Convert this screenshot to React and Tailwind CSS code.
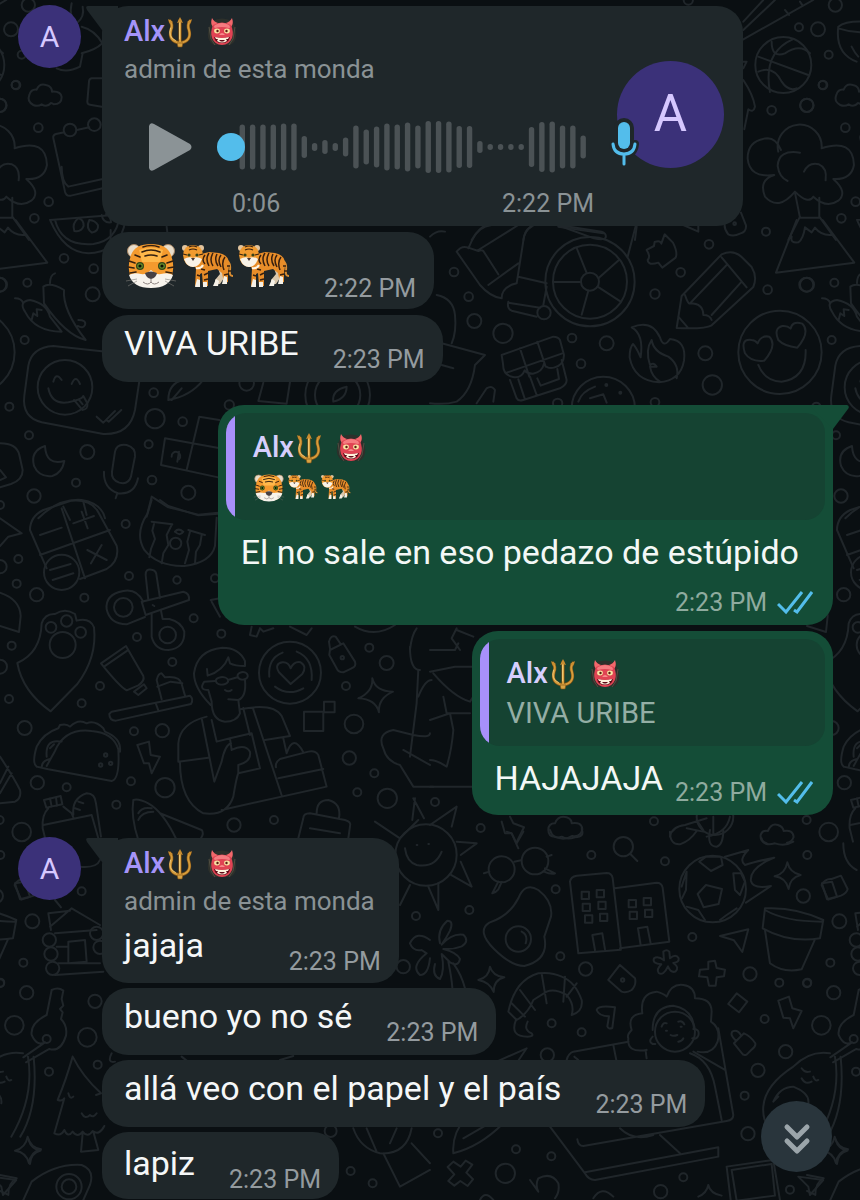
import { useState } from 'react';
import { ChevronDown } from 'lucide-react';

// Wallpaper drawings, in tiles. Each tile uses units of a third of a pixel.
const TILE_WIDTH = 807;

const doodles = [
  {
    x: 0,
    y: 0,
    paths: [
      'M215 10q-10 45 15 60q25-20 18-50M245 80q40 10 62 50q-20 20-62 30M170 205q30 15 70-5l8-40',
      'M100 315q-20-10-12-30q5-18 22-16q8-20 28-14q18 4 18 20q26-2 29 16q0 22-24 22q-4-4-8-4q-12 14-28 4q-12 8-25 2z',
      'M305 235h-30q-8 2-8 10l-5 60q0 8 8 9l35 6',
      'M160 415q-2-10 8-13l25-5M230 390l38-8M160 415l35 160q4 15 18 12l95-22M185 500q0 45 20 60l100-22',
      'M150 660l228-18q-5 90-75 112q-100 30-153-94M165 660q20 80 115 72q70-10 78-82',
      'M235 655q-20 15-12 38q20 5 28-15q0-20-16-23M268 660q-12 25 8 38q20-5 18-22q-8-15-26-16M305 645q5 25 28 22q0-18-15-25'
    ],
    dots: [[85, 15, 20], [33, 88, 21], [65, 164, 12], [48, 255, 13], [0, 316, 20], [115, 383, 13], [146, 605, 13], [103, 655, 13], [210, 390, 19], [283, 374, 19]]
  },
  {
    x: 430,
    y: 0,
    paths: [
      'M985 170l150 55M1025 125q0 50 40 35q45-30 75 0M985 215q45-20 70 30q20 30 45 20M1088 118q-90 40-68 158',
      'M940 65l60-65M940 90l95-90M940 118l210-118M1065 30l12 15M1110 5l8 12',
      'M1225 80q-10 80 55 105M1225 80q30-25 130-10M1225 85q60 20 120 5M1265 140q10 20 20 30',
      'M940 185h10l-10 20M940 240q30 45 35 80q-5 20-20 8l-12 60',
      'M1045 455a66 66 0 1 1 130-10q95-30 97 50q-8 45-62 42q45 40 15 65q-35 25-75-12q-15 25-55-15q-50 60-90 15q-20-50 28-65q-75 10-80-50q0-55 60-60q25 0 40 35',
      'M1110 458q-65-10-67 40q5 35 30 45M1122 515q15-30 45-22q25 10 20 48M1095 578l15 75h58v-60M1110 650l-35 70M1168 650l50 70',
      'M885 665q-5 20 10 38q15 8 35-2q20-5 18-25l-15-38M0 710q20-20 45-15M125 720q20-40 60-45M280 720q5-30 25-40M385 680l135 20M620 680l-5 40'
    ],
    dots: [[1060, 195, 84], [1107, 82, 12], [1178, 255, 12], [1130, 316, 20], [1025, 331, 13], [1008, 695, 12], [914, 671, 4], [775, 0, 14]]
  },
  {
    x: 0,
    y: 220,
    paths: [
      'M75 275q-20-30 15-35q50 10 60 50l35 45q-80 0-110-60zM45 235q20 0 25 15M130 200q20-15 62 10q-5 60 65 150q-60-15-125-110zM150 190q0-25 15-30M235 300q25 0 20 15q-5 12-22 3M95 300l5-20l12 8l-2-20l15 2',
      'M160 378l200 22q60 10 60 70l-15 100q-15 75-95 72l-185-35q-60-15-52-80l12-90q10-55 75-59z',
      'M160 485q8-30 25-5M215 492q12-30 25 0M145 505q10 50 60 42q40-8 45-18M222 540l25 30q18-2 15-20l-12-22M236 538l12 15M290 590l20 18l35-35M318 600l8 5l38-35',
      'M135 678q-45 15-33 60q15 35 55 30q30-10 36-45q-55 15-58-45z',
      'M345 695q5-25 35-20q28 8 25 35l-12 60q-8 25-35 18q-25-8-22-33zM312 755q-2 50 42 65q50 5 60-45M352 820l-5 15',
      'M598 590l-38 160M598 590l60 10M495 655l165 30M495 655l-12 80l175 38M515 710a13 13 0 1 1 22 8M537 695l-5 30',
      'M505 540q0-50 45-60h60q-40 50-105 60zM515 540l30-35M790 488l-15 55l85 8l10-65',
      'M1000 545q-5-35 40-45q0 35-40 45z',
      'M0 670q50 0 58 35l10 45q0 30-35 42l-33 10M0 750l18 22l-18 8',
      'M440 890l15-60l50 32l90 22l60-6M115 895q60-60 130-55q60 10 70 55M190 860l20 40M250 845l10 40M500 20l3 25M620 45q8 15 16 0M332 30v30M1045 48q8 25 30 30'
    ],
    dots: [[192, 115, 13], [281, 146, 13], [0, 194, 21], [82, 188, 12], [278, 223, 21], [74, 360, 12], [195, 502, 82], [461, 518, 13], [465, 596, 29], [548, 605, 13], [28, 560, 12], [87, 646, 12], [446, 673, 12], [262, 696, 21], [228, 788, 12], [456, 780, 13], [565, 818, 21], [102, 828, 20], [0, 855, 12], [688, 555, 14], [740, 490, 22], [1013, 525, 97], [1013, 525, 68]]
  },
  {
    x: 430,
    y: 220,
    paths: [
      'M470 159l-30-75M506 174l60-53M503 200l68 44M475 212l-20 72M453 186h-84',
      'M80 95l70 100M80 95q15-20 35-12l30 10q10-5 15 0l45 70M115 85q20-50 50-70M145 90l120-75M265 130l-90 65M150 195q30 35 65 40q0-35 45-45l22-140q5-25 30-35M265 170l85 20M235 245q-5 20 10 27l75 18M235 248l95 15M350 200l-10 55',
      'M385 15l130 20q15 5 12 18q-5 8-35 2l-110-40M618 15l-25 95M760 15l45 20v-20',
      'M650 90l22-12l2-12q18-6 20 5l10-28l25 25q15 30 8 45l-40 30l-12-15q-30 10-32-8q10-10-3-30z',
      'M755 228l120-125q35-15 60 8l30 30q18 30 5 60l-125 115q-20 12-105 8zM875 112l75 90M765 225q10 30 15 25l110-115M845 285l90-100M780 250q40 0 40 35q20 0 25 15M745 290l28 32',
      'M605 322q60-25 85 30q10 35 30 5q50 5 42 65q-10 60-75 65q-75-5-88-75q0-30 10-40q10 10 23 40q10-70-27-90zM665 360q-20 30-5 75q10-10 20 5h-20q5 30 30 45M665 360q5 35 50 50q35 25 25 65',
      'M215 405l155-55q15 0 20 10l12 45q0 30-30 38q-20 5-30-12q-5 25-33 30q-20 0-25-10q-10 25-35 20q-30-5-30-40zM230 458l165-57M270 385l28 85M322 365l25 75M240 480l20 55q5 10 20 5l110-35q20-10 20-25l-15-60M265 478l20 60M300 470l20 55M322 475l10 22l55-20l-5-30',
      'M445 545q10-30 50-45M480 535l40-12l10 25M140 550l30-45q15-10 25 5l-5 35',
      'M20 225q50 10 55 60q5 50-10 85M35 370l130 35l-30 30q-10 80-55 110q-35 10-80 5M35 435l35 10',
      'M945 400q-15-45 20-40q10 0 18 10q10-25 35-20q25 25-15 72q-40 5-58-22zM1045 360q-15-35 12-42q15-2 25 8q5-25 35-15q25 25-15 72q-40-5-57-23zM985 435q20 50 70 50q75-10 72-95',
      'M1100 0l-62 158l235-30l-95-128M1085 50q-5 20 20 17q15-10 20-45l20 15l10-14q20 25 50 22'
    ],
    dots: [[480, 185, 134], [480, 185, 111], [480, 185, 27], [342, 278, 20], [72, 156, 13], [116, 230, 13], [133, 303, 21], [219, 340, 29], [426, 354, 13], [530, 370, 21], [453, 431, 13], [675, 222, 14], [752, 157, 13], [837, 73, 13], [1013, 209, 13], [1129, 194, 21], [826, 400, 21], [847, 495, 29], [675, 547, 13], [383, 550, 14], [520, 565, 95], [529, 495, 3], [571, 518, 3], [1050, 397, 125]]
  },
  {
    x: 0,
    y: 500,
    paths: [
      'M130 30l85-28q60-5 80 35l55 100q10 45-30 70l-80 30M130 30q-40 20-40 60l50 115M185 25l70 210M120 165l210-75M120 105l65-22M245 35l18 50M220 70l62-22M262 150l58 30M305 135l-32 55M150 210l62-18M158 240l62-20',
      'M455 0l-12 40q-40 60-10 110q40 50 120 48q80-10 92-60l5-85M480 0l25 18l90 28l60-5M455 65l62 8M462 72l-5 20l8 25l-12 30l-5 25M515 75l-15 30l5 30l-15 25l-5 30M565 90l50 15M570 95l-8 30l5 25l-12 40M605 105l-5 30l-12 20l-3 35M525 95q10-12 25 0q-10 15-25 0',
      'M430 305q-20-40-60-32q-55 10-50 55q10 45 60 45l55-22M425 305l125-30q20 5 17 25l-130 45zM437 225q0-20 18-16q15 2 15 20l10 65M437 225l8 75M455 340v70q10 40 50 40q50-5 48-55q-10-30-45-38h-20l-5-25M458 315l5 3',
      'M125 370q10-30 40-28q30-20 60 0l5 20q40-10 52 20q10 90-50 170l-80 82q-85-60-100-145q70-30 73-119z',
      'M303 490l75-52l52 90q5 15-15 28l-35 15q-20-10-77-81zM312 500l70-48M402 575l30-22l8 12l-25 20z',
      'M335 635l235-48q12 10 3 25l-225 50q-20 0-20-20zM468 612l8 22M485 598l-15-58q5-20 15-20l10 12q45-5 50 20l10 35M472 560l40-15l35 5',
      'M632 615q-50-50-50-95q10-70 85-77q50 0 68 40v15q-30 0-45-8l-5-18q-15 40-62 55l-2-20M735 540q5 50-20 60l-30-2M675 570q10 8 20 0M715 600l5 40q-10 25-45 25q-40-5-40-60l-10-35q-30 0-12-25l32-2',
      'M620 650q-80 20-85 80v55l90-12M540 785q0 120 70 155q70 10 90-50q10-60 15-70l65-15l-25-105l-65 15l5 35M605 655l38 190l22-60q10-50 28-55M635 660l15 65l40-10M715 820v-25q40-10 35-40q-15-25-55-5M720 628q100-20 125 20l25 60l-75 12M730 625l20 80M760 628l85 258M665 930l315-70l-25-95q-10-15-30-10l-85 22q-15 10-12 25M835 835l135-28M850 715l10 45q20-60 50-3',
      'M648 545a18 11 0 1 0 36-5a18 11 0 1 0-36 5M713 530a15 11 0 1 0 30-5a15 11 0 1 0-30 5M684 540l28-8',
      'M872 552l-35-35q-15-25 10-30q18-2 25 18q10-22 30-18q20 12 5 35zM808 530q-5-55 40-72M890 455q50 20 45 85M825 560q40 30 85 5',
      'M990 450l40-20l35 55q5 15-10 20l-25 12q-15 0-20-12l-22-40zM990 445l-3-20q5-20 20-15l15 22',
      'M912 635h58v58h-58zM972 605h32v32h-32z',
      'M1117 535q10 40 62 40q-45 20-42 62q-10-40-62-42q45-20 42-60zM412 735l35-10l5 40l28 5l-25 50l-8-30h-15z',
      'M110 800q-15-10 0-60q20-40 65-55l5-10q20-5 30 5q25-25 50-10q25-10 50 15l5 10q50 20 45 60M110 800l35 8l190 35q25-5 20-95q-15-50-80-55q-80-10-110 60l-25 45M125 802q0-20 25-25M140 770q-5-55 45-45M150 745l12-12',
      'M132 900l50-12l5 25l-48 10zM150 895l5 25M168 892l3 25M145 925q-20 20-17 60l10 40M190 920l25 20l5 12M130 975l145-30l20 70M220 945q-5-50 40-65q25 0 28 30l15 100M235 905l15 5M225 925l15 5',
      'M400 900q15-5 45 10q45 25 85 110M400 900q-8 50 15 120M480 940l125 50q8 10-2 25M415 940q10-20 40-15M415 960q10-25 45-25',
      'M895 1015l15-60q0-15 20-15l105 20q20 5 15 20l-5 35M950 940q0-40 35-40q40 10 32 55M930 985l90 15',
      'M1150 745q-20-45 30-55l60 15q50 10 50-5M1150 745q10 40 50 50l40 65h60M1255 510l-5 100l-20 160M1230 450q5-45 20-65M1230 440q0 70 30 70M1255 590q20-50 40-50M1210 750l80 45M1245 895l-8 65M1240 895l32 60M1125 965l75 50l55-55',
      'M0 55l65 45l-40 10l-25 28M0 278q60 20 62 70l-5 48l-57-18M0 770q40 60 60 100q5 25-15 35l-45 5M0 850l25-50M0 880l35-60M755 380l-5 25l20 5l10-25M780 385l10 10l30-10M870 380l50 25l15-20M1065 380q60 35 120-5',
      'M632 300l28-5M635 305l25 45'
    ],
    dots: [[185, 217, 53], [527, 130, 17], [370, 322, 28], [503, 405, 25], [153, 382, 16], [200, 363, 17], [242, 397, 16], [188, 435, 39], [870, 518, 93], [1027, 473, 5], [317, 765, 5], [302, 795, 5], [332, 790, 5], [377, 72, 12], [55, 177, 12], [387, 228, 12], [531, 240, 11], [645, 235, 12], [50, 251, 12], [110, 284, 20], [0, 200, 20], [253, 293, 12], [581, 355, 12], [411, 411, 12], [664, 401, 12], [517, 486, 12], [35, 437, 12], [0, 500, 21], [300, 558, 12], [27, 597, 12], [245, 610, 12], [74, 684, 21], [402, 694, 12], [487, 692, 20], [112, 848, 20], [200, 862, 12], [393, 844, 12], [495, 863, 29], [349, 914, 12], [65, 996, 28], [702, 975, 20], [822, 960, 12], [1072, 877, 12], [1162, 895, 29], [1123, 820, 12], [1048, 774, 20], [1062, 672, 28], [1038, 558, 12], [1108, 443, 12], [1160, 489, 21]]
  },
  {
    x: 430,
    y: 500,
    paths: [
      'M80 385l-15 30l25 35M0 450h75l10-20M0 515l75-15h60M10 520q60 70 110 85l10-15M40 590l10 50h70M0 660l60-20l10 50q-5 60-20 110q-30-20-50-20M80 390l50 20M0 860h130M0 975l80-55l-15 60',
      'M215 965l10 35h20l20 45M240 950l10 20l32 12l-20 40',
      'M375 1010q-20 0-20-20q0-20 20-20q10-25 35-18q15 5 15 18q30-5 32 18q-5 25-30 20q-25 15-52 2z',
      'M720 1010q5-30 45-35l65-20M830 1010q60-10 70-60M770 985l50 10M850 950v55M800 960l20 30',
      'M1010 1030q-20-5-18-25q5-15 22-12q10-25 30-18q15 5 17 18q28-5 30 18q-5 15-20 17'
    ],
    dots: [[15, 906, 12], [152, 984, 12], [672, 964, 12], [1130, 960, 12], [855, 950, 55]]
  },
  {
    x: 0,
    y: 830,
    paths: [
      'M145 250l65-8M145 250l8 50M150 290l65-55l85 50M165 310l125-10M170 350h35M175 400h125M165 435l145-10M205 335l50-5l5 65l-55 5z',
      'M45 160l30-5l15 45l-30 8zM240 110q50 5 60-20M165 210l18 22',
      'M155 480q20-10 35 2l-5 25l5 20l-10 10l8 10l-5 20q20 20 15 50q-15 50-50 40l-70 40M155 480l-15 75q-50 25-45 60q15 35 40 22l-65 45',
      'M218 680q-20 70-45 130q15 5 20-5l-30 105q20 10 30-10q10 25 25 5q15 20 30 0q15 20 30-2q20 15 35-15M218 680q30 60 85 110l-15 5M248 910l-5 55l52-5l-15-55M205 790q5 20 15 10M245 850q10 20 25 5q10 10 20-5',
      'M83 920q8 32 40 38q-32 8-36 42q-8-34-42-38q32-8 38-42zM0 1035l50 10q-25 12-25 50l-25-12M70 1110l25-55q70-55 150-50q40 15 25 60l-20 45',
      'M1230 340q20-40 60-10M1230 340q10 25 35 20l15 10q-50 40-20 65q25 0 30-50M335 670q-15 30 10 25M545 680l15 12M840 690l40-12M1060 895q20 60 80 75q80 5 95-75M1100 895l30 70M1170 940l20-45M1150 970l50 100l90-50M1235 940l55 60'
    ],
    dots: [[148, 330, 20], [153, 372, 20], [158, 415, 20], [290, 310, 20], [300, 352, 20], [140, 627, 12], [207, 1070, 38], [207, 1070, 22], [245, 184, 12], [97, 274, 21], [70, 398, 12], [80, 488, 20], [285, 514, 20], [43, 586, 28], [262, 622, 28], [147, 725, 12], [293, 704, 12], [0, 460, 12], [1248, 258, 12], [1052, 1023, 12], [1118, 1060, 12], [992, 903, 18], [1210, 410, 20]]
  },
  {
    x: 430,
    y: 830,
    paths: [
      'M80 35l60 5l-48 35M92 95l33 75l-62-35M25 160v80l-30-70M-60 165l-30 60M35 65q-20 50-75 40q-30-10-35-50M-40 45h2M-5 42h2',
      'M253 95l20-4M205 155l-18 35q10-2 18-12l10-22M178 125l-16 5M350 80l15-5M345 115l30 15q-10 5-35-6',
      'M265 205q20-50 60-25q45 35 38 80l-20 60q15 70-60 88q-40 0-90-50q-55-55-15-80q60-20 87-73zM275 305q20 10 12 35',
      'M445 370l-25-215q2-15 20-18l90-8q15 0 18 15l25 215zM555 175l125-17q15 0 18 15l20 162l-148 20M495 360l-8-45l30-5l8 48M632 345l-8-50l28-5l10 50',
      'M455 185h22v22h-22zM500 180h22v22h-22zM458 221h22v22h-22zM505 215h22v22h-22zM465 256h22v22h-22zM510 251h22v22h-22zM596 210h22v22h-22zM641 204h22v22h-22zM599 245h22v22h-22zM645 239h22v22h-22z',
      'M828 165l48 12l-10 45l-45 10l-18-40zM808 95l20-15h45l5 25l-35 18zM755 170l15-45l-2 55l-12 25M910 130l5 50l15 15l15-40l-12-25zM770 230l35 10l20 30M870 270l20-15l30-20M885 80l70-20q-30 30-10 45q30-10 88-22q-75 30-70 70q5 25 60 15l-75 50',
      'M602 73l20 20M1072 97q8 32 40 38q-32 8-36 42q-8-34-42-38q32-8 38-42zM180 410q8 28 43 32q-32 8-32 44q-12-30-46-36q32-8 35-40zM1217 930q8 28 36 32q-30 8-32 40M835 1065q5 25 40 32M835 1065q-5 25-30 35',
      'M1005 235q90-5 175 35l-10 55q-90 15-172-30zM1005 240q60 35 172 35M1005 300l15 100q40 30 95 18l40-90',
      'M870 318l85-20l-18 68l-25-35zM1105 1040l75 10l-40 45l-5-25z',
      'M700 365q10-8 18 0l2 20q18-15 26 0q2 12-16 14q20 14 6 26q-14 4-22-16q-14 30-28 20q-8-10 8-26q-28-2-22-18q12-8 30 6z',
      'M835 395l20-3l5 22l25 5l-3 20l-22 3l-3 25h-20l-5-25l-25-3l3-20l25-2zM70 995l22 15l15-18l20 12l-18 24l20 20l-16 20l-22-15l-18 14l-18-14l18-20l-20-22zM920 490l32 25l-25 32l-32-25z',
      'M570 405l45 40q5 20-10 35q-15 10-30 5l-40-35zM1045 512l32-12l10 35l28 8l-25 52l-10-30l-20-2zM500 540q5-15 55-8l-8 62q-12 5-15-5l5-30q-30 0-37-19z',
      'M912 640l30-30q20 8 34 30q2 10-10 18l-16 16q-10 4-14-4zM918 632q-20-18-10-28q15-6 25 12M1175 165q10-20 30-18l28-10l20 40q-2 12-20 20l-38 12z',
      'M325 430q-70 20-90 115l25 25q35-20 50-60l40-25q25-10 60 10q25 30 15 60q35-10 30-45q-20-55-60-70q-30-15-70-10zM335 430l15 90M270 480l45 60M245 520l40 40M405 440l-5 75M440 460l-30 40M258 570q-20 50 35 50q20 0 12-10q-25-10-12-35',
      'M650 685q-5-30 0-25q-60 10-55-35q-5-10 10-25q-15-45 32-50q-8-60 43-65q20 5 30 15q15-40 50-35q35 5 35 40q50 0 50 40l-2 30q30 20 20 60q-15 40-60 30',
      'M668 600q0-70 62-73q60 10 62 70M668 620q-15 15 0 22h8M790 597q20 0 15 20q-5 12-18 8M695 590q5-15 15-10M745 575q12-5 18 8M708 602h3M752 590h3M722 615q8 5 20 0M745 635q12-2 15-10',
      'M410 690q5-20 20-25l165-30M865 595l45 260q0 15-20 18l-430 75q-15 0-18-20M360 890l105 140q10 20 30 20l370-70v-28l-400 75M690 915l60 55M550 645l10 50M780 670q60 20 75 100l20 100M790 665l95 55M445 690l-12-10M570 895q40 40 100 20',
      'M890 1010l140-20l20 120M890 1010l12 100M905 1020l120-18l10 95l-115 15z',
      'M70 970q-5-60 40-110q100-80 180-205l-90 40M70 970q80-20 150-90M100 925l70-40',
      'M30 340q-10-40 22-68q20 0 8 30q-10 20-25 42q30-35 65-30q20 20-5 35q-25 10-55 8q40 10 50 30q-5 25-30 10l-25-25q10 50-5 75q-25-10-15-45M55 395q10 50 12 78M70 400q25 35 35 75',
      'M1200 670q-60-10-110 40q-85 55-90 120q-5 60 50 90M1215 680q20 120-50 240M1232 680q15 150-40 240M1115 715q10 15 25 10M1150 740q5 15 15 10M1115 745q10 20 30 10M1030 815q20-45 60-45q50 20 45 50M1030 815l15-15',
      'M230 5l15 5l15 30l20-35M360 0q10 30 35 20q15 10 40 2q30 0 20-25M720 5q0 40 30 38q30-10 50-40M840 0q-10 50 20 50q20-5 20-50M995 25q5 25 40 15q30 10 55-5M1240 40q0 60 40 80M300 1050l25 35q-10-20 0-40q40-20 60 15q5 25-10 45M150 1110q15-30 40 0M490 1105q25-40 60-5'
    ],
    dots: [[-12, 75, 92], [215, 118, 39], [315, 93, 40], [265, 327, 38], [578, 450, 5], [848, 177, 100], [580, 50, 29], [735, 605, 60], [484, 75, 12], [705, 94, 12], [118, 240, 12], [377, 178, 12], [391, 379, 12], [467, 417, 20], [787, 321, 12], [960, 432, 20], [1048, 458, 12], [1004, 567, 12], [1067, 665, 20], [984, 721, 20], [944, 797, 12], [954, 911, 20], [365, 580, 12], [455, 607, 12], [352, 675, 20], [24, 910, 12], [258, 958, 12], [364, 979, 12], [226, 1030, 29], [760, 1042, 12], [692, 1085, 20], [1080, 1079, 12], [1132, 75, 12], [1120, 198, 20], [1132, 458, 12]]
  }
];

const Wallpaper = () => (
  <svg
    className="pointer-events-none absolute inset-0 h-full w-full"
    viewBox="0 0 860 1200"
    preserveAspectRatio="xMinYMin slice"
    fill="none"
    stroke="#20262a"
    strokeLinecap="round"
    strokeLinejoin="round"
    aria-hidden="true"
  >
    <g id="doodles">
      {doodles.map((tile) => (
        <g key={`${tile.x}-${tile.y}`} transform={`translate(${tile.x} ${tile.y}) scale(0.3333)`} strokeWidth="6">
          {tile.paths.map((d) => <path key={d} d={d} />)}
          {tile.dots.map(([cx, cy, r]) => <circle key={`${cx}-${cy}-${r}`} cx={cx} cy={cy} r={r} />)}
        </g>
      ))}
    </g>
    <use href="#doodles" x={TILE_WIDTH} />
    <use href="#doodles" x={-TILE_WIDTH} />
  </svg>
);

const Trident = () => (
  <svg className="h-[31px] w-[26px]" viewBox="0 0 26 31" role="img" aria-label="trident">
    <g fill="none" strokeLinecap="round">
      <path d="M3 4q3 4 1 9q-3 11 9 13q12-2 9-13q-2-5 1-9M13 3v25" stroke="#805316" strokeWidth="3.2" />
      <path d="M3 4q3 4 1 9q-3 11 9 13q12-2 9-13q-2-5 1-9M13 3v25" stroke="#d79d3c" strokeWidth="2" />
      <path d="M3.500 11q-3 9 5 12.500M12.600 6v16" stroke="#f6d588" strokeWidth="0.800" />
    </g>
    <path d="M13 0l3 6l-3-1l-3 1zM1 2l5 3l-3 2zM25 2l-5 3l3 2z" fill="#c98d31" />
    <path d="M10 26h6l-1 4h-4z" fill="#d9a344" stroke="#7d4f12" strokeWidth="0.600" />
  </svg>
);

const Ogre = () => (
  <svg className="h-[31px] w-[30px]" viewBox="0 0 30 31" role="img" aria-label="ogre">
    <path d="M5 4q10-5 20 0q5 9 4 16q-1 6-6 8H7q-5-3-6-8q-1-8 4-16z" fill="#2d302b" />
    <path d="M2 10l2 12M28 10l-2 12M4 22l4 6M26 22l-4 6" stroke="#514f42" strokeWidth="1" />
    <path d="M5 1q-2 6 1 9l5-4q-4-1-6-5zM25 1q2 6-1 9l-5-4q4-1 6-5z" fill="#f2676b" />
    <path d="M6 8q9-5 18 0q3 7 1 13q-3 7-10 7T5 21Q3 15 6 8z" fill="#e04353" />
    <path d="M8 8q7-4 14 0q2 3 0 3q-7-2-14 0q-2-1 0-3z" fill="#f57c80" />
    <ellipse cx="10" cy="14" rx="2.900" ry="2.400" fill="#f8e2a2" />
    <ellipse cx="20" cy="14" rx="2.900" ry="2.400" fill="#f8e2a2" />
    <circle cx="10.500" cy="14" r="1.200" fill="#5a1c13" />
    <circle cx="19.500" cy="14" r="1.200" fill="#5a1c13" />
    <path d="M12 18q3-4 6 0z" fill="#f78a8a" />
    <path d="M7 20q8 2 16 0q-1 6-8 6t-8-6z" fill="#5e0a18" />
    <path d="M8 20q7 2 14 0l-1 2h-2l-1 1h-6l-1-1H9zM10 24l1-2l2 2q2 1 4 0l2-2l1 2q-5 3-10 0z" fill="#fff2dc" />
  </svg>
);

const TigerFace = ({ className }) => (
  <svg className={className} viewBox="0 0 52 46" role="img" aria-label="tiger face">
    <circle cx="9" cy="8" r="6.500" fill="#e8ddcb" stroke="#a78562" />
    <circle cx="43" cy="8" r="6.500" fill="#e8ddcb" stroke="#a78562" />
    <path d="M26 1q16 0 20 11q3 8 2 15q-1 17-22 17T4 27q-1-7 2-15Q10 1 26 1z" fill="#f49a2e" />
    <path d="M14 7q12-5 24 0l-3 12H17z" fill="#ffb84a" />
    <path d="M4 32q5-3 12-1q5 1 10-4q5 5 10 4q7-2 12 1q-4 13-22 13T4 32z" fill="#f7f3ec" />
    <path d="M18 4q8-3 16 0M17 9q9-4 18 0M20 13q6-2 12 0M4 18l6 2M3 24l6 1M48 18l-6 2M49 24l-6 1M5 30l6-1M47 30l-6-1M10 12l5 2M42 12l-5 2" fill="none" stroke="#34200f" strokeWidth="1.600" strokeLinecap="round" />
    <circle cx="15" cy="23" r="4" fill="#304416" />
    <circle cx="37" cy="23" r="4" fill="#304416" />
    <circle cx="15" cy="23" r="2.800" fill="#668c2c" />
    <circle cx="37" cy="23" r="2.800" fill="#668c2c" />
    <circle cx="15" cy="23" r="1.600" fill="#0c1005" />
    <circle cx="37" cy="23" r="1.600" fill="#0c1005" />
    <path d="M20 30q6-3 12 0q-1 5-6 6q-5-1-6-6z" fill="#464044" />
    <path d="M26 36v3M18 39q5 4 8 0q3 4 8 0" fill="none" stroke="#8c827f" strokeWidth="1" />
    <path d="M12 36L1 38M12 38L3 43M40 36l11 2M40 38l9 5" stroke="#807d78" strokeWidth="0.600" />
  </svg>
);

const Tiger = ({ className }) => (
  <svg className={className} viewBox="0 0 52 44" role="img" aria-label="tiger">
    <path d="M45 17q4 2 3 10q-1 5 3 5" fill="none" stroke="#d98d32" strokeWidth="2" />
    <path d="M36 24l2 6l-5 6v4h5l6-9l1-9zM21 25l4 6v12h-4z" fill="#d9c7ac" />
    <path d="M14 14q5-5 13-6l10 1q11 2 10 13l-1 8v8l-4 1l-2-10l-5-4l-9 2v15h-5l-1-13l-2 1v12h-5l1-17q-4-7 0-11z" fill="#e88d29" />
    <path d="M13 43l2-8l3 1v7zM21 43v-5h4v5zM40 40l2-8l3 1v7zM31 42l3-7l3 2l-1 5z" fill="#f5f1e8" />
    <path d="M23 11q-4 5 0 9M27 9q-4 6 0 13M31 9q-4 7 0 13M35 10q-3 6 1 12M39 11q-4 5 0 12M43 13q-4 5-1 13M15 31l3 1M22 31l4-2M22 36l4-1M42 31l4-1M48 22h-3M49 27h-3M19 25l4 1" stroke="#38200f" strokeWidth="1.500" fill="none" />
    <circle cx="3" cy="4" r="3" fill="#e2c49e" />
    <circle cx="19" cy="4" r="3" fill="#e2c49e" />
    <path d="M11 1q9 0 10 10q-1 11-10 12Q2 22 1 11Q2 1 11 1z" fill="#f19b30" />
    <path d="M2 15q5-3 9-1q4-2 9 1q-3 8-9 8t-9-8z" fill="#f8f2e7" />
    <path d="M7 3q4-2 8 0M7 6q4-2 8 0M1 10l4 1M21 10l-4 1" stroke="#38200f" strokeWidth="1.200" fill="none" />
    <circle cx="7" cy="11" r="1.600" fill="#354219" />
    <circle cx="15" cy="11" r="1.600" fill="#354219" />
    <path d="M9 14h4l-2 3z" fill="#463735" />
    <path d="M14 24q5 1 7-3" stroke="#fff6e6" strokeWidth="2" fill="none" />
  </svg>
);

const ReadTicks = () => (
  <svg className="h-6 w-9" viewBox="0 0 36 24" fill="none" stroke="#53bdeb" strokeWidth="3" role="img" aria-label="Read">
    <path d="M1 13l8 8L25 1M17 19l3 2L35 1" />
  </svg>
);

const SenderName = ({ className }) => (
  <div className={`flex h-[38px] items-center text-[29px] font-medium ${className}`}>
    <span>Alx</span>
    <span className="ml-0.5 flex"><Trident /></span>
    <span className="ml-3.5 flex"><Ogre /></span>
  </div>
);

const Time = ({ children, className = '' }) => (
  <time className={`text-[25px] leading-9 whitespace-nowrap ${className}`}>{children}</time>
);

const SmallAvatar = () => (
  <div className="flex size-[63px] shrink-0 items-center justify-center rounded-full bg-[#3b3179] text-[30px] text-[#d6c8ff]">A</div>
);

const LeftTail = () => (
  <svg className="absolute top-0 -left-4 h-6 w-8" viewBox="0 0 32 24" fill="#1f272a" aria-hidden="true">
    <path d="M2 0h30v24H16L1 4Q-1 0 2 0z" />
  </svg>
);

const RightTail = () => (
  <svg className="absolute top-0 -right-4 h-6 w-10" viewBox="0 0 40 24" fill="#144d37" aria-hidden="true">
    <path d="M0 0h38q3 1 1 4L24 24z" />
  </svg>
);

const Incoming = ({ time, children, className = 'pt-2 pb-1' }) => (
  <article className={`flex w-fit items-end gap-[34px] rounded-[26px] bg-[#1f272a] pr-[18px] pl-[22px] ${className}`}>
    <div className="mb-[15px] min-h-10 text-[34px] leading-10 text-[#f5f7f8]">{children}</div>
    <Time className="text-[#949b9f]">{time}</Time>
  </article>
);

const Quote = ({ children }) => (
  <blockquote className="flex h-[107px] overflow-hidden rounded-[20px] bg-[#154332]">
    <div className="w-[9px] bg-[#a790fa]" />
    <div className="pt-4 pl-[18px]">
      <SenderName className="text-[#d6cffd]" />
      <div className="mt-[3px] flex h-9 items-center text-[29px] text-[#94aea5]">{children}</div>
    </div>
  </blockquote>
);

const levels = [
  45, 45, 45, 45, 47, 47, 22, 8, 14, 8, 19, 43, 35, 41, 47, 45, 49,
  43, 52, 52, 51, 42, 42, 12, 6, 6, 6, 6, 40, 50, 51, 43, 43, 23
];

const VoiceMessage = () => {
  const [position, setPosition] = useState(0);

  return (
    <article className="relative flex w-[641px] max-w-full rounded-[26px] bg-[#1f272a] pt-[7px] pr-[19px] pb-1 pl-[22px]">
      <LeftTail />
      <div className="flex-1">
        <SenderName className="text-[#a594f9]" />
        <p className="text-[26px] leading-9 text-[#8a9295]">admin de esta monda</p>
        <div className="mt-8 flex items-center pl-[25px]">
          <button type="button" aria-label="Play voice message" className="mr-[25px] shrink-0">
            <svg className="h-12 w-[43px]" viewBox="0 0 43 48" fill="#8b9396" aria-hidden="true">
              <path d="M0 3Q1-1 5 1l36 20q3 3 0 6L5 47q-4 2-5-2z" />
            </svg>
          </button>
          <div className="relative h-14 w-[371px]">
            <svg className="h-14 w-[371px]" viewBox="0 0 371 56" fill="#4b5255" aria-hidden="true">
              {levels.map((level, i) => (
                <rect key={i} x={22.6 + i * 10.33} y={28 - level / 2} width="5.4" height={level} rx="2.7" />
              ))}
            </svg>
            <input
              type="range"
              min="0"
              max="6"
              value={position}
              onChange={(e) => setPosition(Number(e.target.value))}
              aria-label="Voice message position"
              className="absolute inset-0 h-14 w-full appearance-none bg-transparent [&::-webkit-slider-thumb]:size-7 [&::-webkit-slider-thumb]:appearance-none [&::-webkit-slider-thumb]:rounded-full [&::-webkit-slider-thumb]:bg-[#53bdeb]"
            />
          </div>
        </div>
        <div className="mt-[11px] mr-[23px] flex justify-between pl-[108px] text-[#8a9295]">
          <Time>0:06</Time>
          <Time>2:22 PM</Time>
        </div>
      </div>
      <div className="relative mt-12 flex size-[107px] shrink-0 items-center justify-center rounded-full bg-[#3b3179] text-[51px] text-[#d6c8ff]">
        A
        <svg className="absolute top-14 -left-2 h-[50px] w-[30px]" viewBox="0 0 30 50" fill="none" strokeLinecap="round" aria-hidden="true">
          <path d="M15 11v11" stroke="#1f272a" strokeWidth="20" />
          <path d="M4 27q1 10 11 10t11-10" stroke="#1f272a" strokeWidth="8" />
          <path d="M15 11v15" stroke="#53bdeb" strokeWidth="12" />
          <path d="M4 27q1 10 11 10t11-10M15 37v10" stroke="#53bdeb" strokeWidth="3" />
        </svg>
      </div>
    </article>
  );
};

const App = () => (
  <main className="relative min-h-screen overflow-hidden bg-[#0a0f12] font-[Roboto,sans-serif]">
    <Wallpaper />
    <div className="relative flex flex-col pt-[5px] pr-[27px] pl-[18px]">
      <section className="flex items-start gap-[21px]">
        <SmallAvatar />
        <div className="flex min-w-0 flex-1 flex-col gap-[6px] pt-px">
          <VoiceMessage />
          <Incoming time="2:22 PM" className="pt-[7px] pb-[2px]">
            <div className="flex h-[53px] items-center gap-1">
              <TigerFace className="h-[46px] w-[54px]" />
              <Tiger className="h-11 w-[52px]" />
              <Tiger className="h-11 w-[52px]" />
            </div>
          </Incoming>
          <Incoming time="2:23 PM">VIVA URIBE</Incoming>
        </div>
      </section>

      <section className="mt-[23px] flex flex-col items-end gap-[6px]">
        <article className="relative rounded-[26px] rounded-tr-none bg-[#144d37] px-2 pt-2 pb-1">
          <RightTail />
          <div className="relative">
            <Quote>
              <span className="flex gap-[3px]">
                <TigerFace className="h-7 w-8" />
                <Tiger className="h-[26px] w-[30px]" />
                <Tiger className="h-[26px] w-[30px]" />
              </span>
            </Quote>
          </div>
          <p className="mt-3 pr-[26px] pl-[15px] text-[34px] leading-10 text-[#f3f8f6]">El no sale en eso pedazo de estúpido</p>
          <div className="mt-[13px] flex items-center justify-end gap-2.5 pr-3">
            <Time className="text-[#8fab9f]">2:23 PM</Time>
            <ReadTicks />
          </div>
        </article>

        <article className="rounded-[26px] bg-[#144d37] px-2 pt-2 pb-1">
          <Quote>VIVA URIBE</Quote>
          <div className="mt-3 flex items-end pr-3 pl-[15px]">
            <p className="mb-[13px] text-[34px] leading-10 text-[#f3f8f6]">HAJAJAJA</p>
            <div className="ml-3 flex items-center gap-2.5">
              <Time className="text-[#8fab9f]">2:23 PM</Time>
              <ReadTicks />
            </div>
          </div>
        </article>
      </section>

      <section className="mt-[22px] flex items-start gap-[21px]">
        <SmallAvatar />
        <div className="flex min-w-0 flex-1 flex-col gap-[5px] pt-px">
          <article className="relative w-fit rounded-[26px] bg-[#1f272a] pt-[7px] pr-[18px] pb-[3px] pl-[22px]">
            <LeftTail />
            <SenderName className="text-[#a594f9]" />
            <p className="pr-1.5 text-[26px] leading-9 text-[#8a9295]">admin de esta monda</p>
            <div className="mt-[6px] flex items-end justify-between">
              <p className="mb-[15px] text-[34px] leading-10 text-[#f5f7f8]">jajaja</p>
              <Time className="text-[#949b9f]">2:23 PM</Time>
            </div>
          </article>
          <Incoming time="2:23 PM">bueno yo no sé</Incoming>
          <Incoming time="2:23 PM">allá veo con el papel y el país</Incoming>
          <Incoming time="2:23 PM" className="pt-[11px] pb-px">lapiz</Incoming>
        </div>
      </section>
    </div>

    <button
      type="button"
      aria-label="Scroll to latest messages"
      className="absolute right-7 bottom-7 flex size-[71px] flex-col items-center justify-center rounded-full bg-[#29353c] pt-1 text-[#9ba5aa]"
    >
      <ChevronDown className="-mb-[26px] size-10" strokeWidth={3} />
      <ChevronDown className="size-10" strokeWidth={3} />
    </button>
  </main>
);

export default App;
